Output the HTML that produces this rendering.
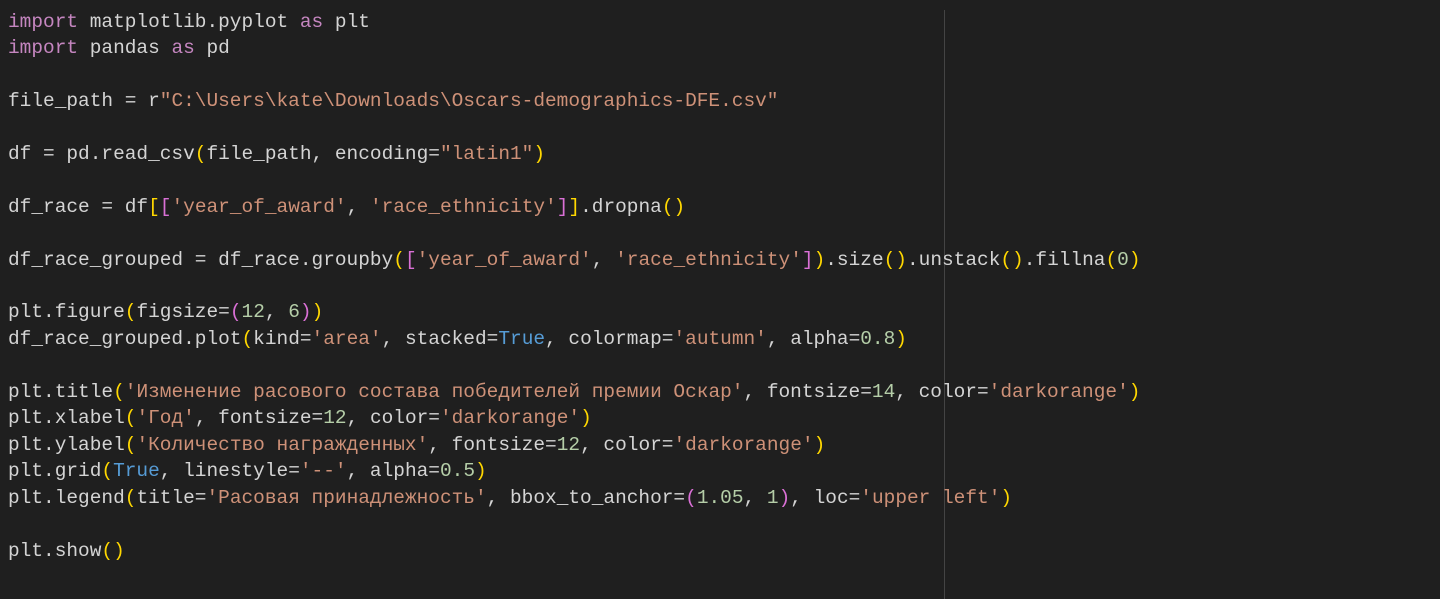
<!DOCTYPE html><html><head><meta charset="utf-8"><style>
body{margin:0;width:1440px;height:599px;background:#1f1f1f;overflow:hidden;position:relative}
pre{margin:0;position:absolute;left:8px;top:8.5px;font-family:"Liberation Mono","DejaVu Sans Mono",monospace;font-size:19.47px;line-height:26.45px;color:#d4d4d4}
.k{color:#c586c0}.s{color:#ce9178}.n{color:#b5cea8}.b{color:#569cd6}.y{color:#ffd700}.p{color:#da70d6}
.v{position:absolute;left:944px;top:10px;width:1px;height:589px;background:#444}
</style></head><body><div class="v"></div><pre><span class="k">import</span> matplotlib.pyplot <span class="k">as</span> plt
<span class="k">import</span> pandas <span class="k">as</span> pd

file_path = r<span class="s">"C:\Users\kate\Downloads\Oscars-demographics-DFE.csv"</span>

df = pd.read_csv<span class="y">(</span>file_path, encoding=<span class="s">"latin1"</span><span class="y">)</span>

df_race = df<span class="y">[</span><span class="p">[</span><span class="s">'year_of_award'</span>, <span class="s">'race_ethnicity'</span><span class="p">]</span><span class="y">]</span>.dropna<span class="y">()</span>

df_race_grouped = df_race.groupby<span class="y">(</span><span class="p">[</span><span class="s">'year_of_award'</span>, <span class="s">'race_ethnicity'</span><span class="p">]</span><span class="y">)</span>.size<span class="y">()</span>.unstack<span class="y">()</span>.fillna<span class="y">(</span><span class="n">0</span><span class="y">)</span>

plt.figure<span class="y">(</span>figsize=<span class="p">(</span><span class="n">12</span>, <span class="n">6</span><span class="p">)</span><span class="y">)</span>
df_race_grouped.plot<span class="y">(</span>kind=<span class="s">'area'</span>, stacked=<span class="b">True</span>, colormap=<span class="s">'autumn'</span>, alpha=<span class="n">0.8</span><span class="y">)</span>

plt.title<span class="y">(</span><span class="s">'Изменение расового состава победителей премии Оскар'</span>, fontsize=<span class="n">14</span>, color=<span class="s">'darkorange'</span><span class="y">)</span>
plt.xlabel<span class="y">(</span><span class="s">'Год'</span>, fontsize=<span class="n">12</span>, color=<span class="s">'darkorange'</span><span class="y">)</span>
plt.ylabel<span class="y">(</span><span class="s">'Количество награжденных'</span>, fontsize=<span class="n">12</span>, color=<span class="s">'darkorange'</span><span class="y">)</span>
plt.grid<span class="y">(</span><span class="b">True</span>, linestyle=<span class="s">'--'</span>, alpha=<span class="n">0.5</span><span class="y">)</span>
plt.legend<span class="y">(</span>title=<span class="s">'Расовая принадлежность'</span>, bbox_to_anchor=<span class="p">(</span><span class="n">1.05</span>, <span class="n">1</span><span class="p">)</span>, loc=<span class="s">'upper left'</span><span class="y">)</span>

plt.show<span class="y">()</span></pre></body></html>
